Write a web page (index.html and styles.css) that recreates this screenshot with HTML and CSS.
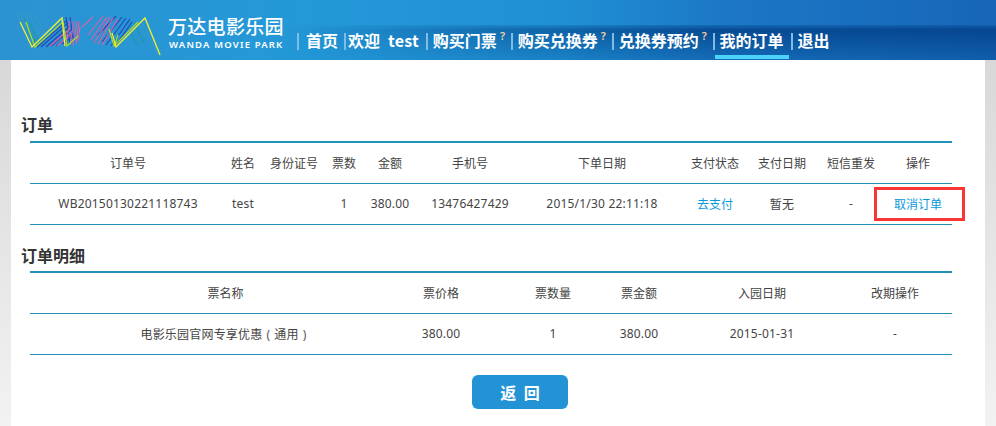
FILE: index.html
```html
<!DOCTYPE html>
<html lang="zh-CN">
<head>
<meta charset="utf-8">
<title>我的订单</title>
<link rel="stylesheet" href="styles.css">
</head>
<body>
<header class="header">
  <a class="logo">
    <svg class="logo-mark" width="155" height="55" viewBox="0 0 155 55" fill="none">
      <g stroke="#3fa0b8" stroke-width=".7" opacity=".8"><path d="M5 5 21 42M9 6 25 39M14 8 30 37M19 9 33 36M25 9 37 34"/><path d="M152 51 135 14M147 47 131 16M142 42 128 17"/></g>
      <g stroke="#1f9a8c" stroke-width="1"><path d="M14 13 27 42M19 17 31 40M46 16 58 38M124 17 134 38M118 22 127 40"/></g>
      <g stroke="#2346b8" stroke-width="1.1"><path d="M27 42 56 16M31 42 58 18M36 42 60 21M41 41 62 24M46 41 63 28M52 39 65 30"/><path d="M92 37 112 12M96 40 116 13M101 41 120 14M106 40 122 17M88 30 106 11"/><path d="M56 12 60 38M60 12 64 38"/></g>
      <g stroke="#de5fa6" stroke-width="1.1"><path d="M40 41 60 24M47 41 62 28M56 39 60 16M60 40 64 16M63 40 67 16M66 39 69 17M68 36 70 22"/><path d="M78 30 93 11M81 35 97 12M84 38 100 12M88 39 103 13M92 40 108 14M72 22 83 12"/></g>
      <path stroke="#a5d92f" stroke-width="1.3" d="M16 17 25 42 53 17 57 41 68 31"/>
      <path stroke="#a5d92f" stroke-width="1.3" d="M99 24 104 41 128 17 M104 41 108 30"/>
      <path stroke="#f0f030" stroke-width="1.3" d="M10 17 22 42 52 13 55 41"/>
      <path stroke="#f0f030" stroke-width="1.3" d="M102 28 106 42 135 13 150 50"/>
    </svg>
    <span class="logo-text">
      <span class="logo-cn">万达电影乐园</span>
      <span class="logo-en">WANDA MOVIE PARK</span>
    </span>
  </a>
  <nav class="nav">
    <span class="sep sep-first"></span><a class="nav-item">首页</a>
    <span class="sep sep-tight"></span><a class="nav-item">欢迎</a><a class="nav-item nav-user">test</a>
    <span class="sep"></span><a class="nav-item">购买门票</a><sup class="hint">?</sup>
    <span class="sep"></span><a class="nav-item">购买兑换券</a><sup class="hint">?</sup>
    <span class="sep"></span><a class="nav-item">兑换券预约</a><sup class="hint">?</sup>
    <span class="sep"></span><a class="nav-item nav-active">我的订单</a>
    <span class="sep"></span><a class="nav-item">退出</a>
  </nav>
</header>

<main class="page">
  <section class="section section-orders">
    <h2 class="title">订单</h2>
    <table class="grid">
      <colgroup>
        <col class="o1"><col class="o2"><col class="o3"><col class="o4"><col class="o5"><col class="o6"><col class="o7"><col class="o8"><col class="o9"><col class="o10"><col class="o11">
      </colgroup>
      <thead>
        <tr><th>订单号</th><th>姓名</th><th>身份证号</th><th>票数</th><th>金额</th><th>手机号</th><th>下单日期</th><th>支付状态</th><th>支付日期</th><th>短信重发</th><th>操作</th></tr>
      </thead>
      <tbody>
        <tr>
          <td>WB20150130221118743</td><td>test</td><td></td><td>1</td><td>380.00</td><td>13476427429</td><td>2015/1/30 22:11:18</td>
          <td><a class="link">去支付</a></td><td>暂无</td><td>-</td>
          <td class="marked"><a class="link">取消订单</a><span class="red-box"></span></td>
        </tr>
      </tbody>
    </table>
  </section>

  <section class="section section-detail">
    <h2 class="title">订单明细</h2>
    <table class="grid">
      <colgroup>
        <col class="d1"><col class="d2"><col class="d3"><col class="d4"><col class="d5"><col class="d6">
      </colgroup>
      <thead>
        <tr><th class="first">票名称</th><th>票价格</th><th>票数量</th><th>票金额</th><th>入园日期</th><th class="last">改期操作</th></tr>
      </thead>
      <tbody>
        <tr><td class="first">电影乐园官网专享优惠<span class="paren">(</span>通用<span class="paren">)</span></td><td>380.00</td><td>1</td><td>380.00</td><td>2015-01-31</td><td class="last">-</td></tr>
      </tbody>
    </table>
  </section>

  <div class="actions"><a class="back">返 回</a></div>
</main>
</body>
</html>
```

FILE: styles.css
```css
* { box-sizing: border-box; }
html, body { margin: 0; padding: 0; }
body {
  width: 996px;
  height: 426px;
  overflow: hidden;
  background: linear-gradient(#d8d8d8 60px, #f2f2f2 426px);
  font-family: "Noto Sans", "Noto Sans CJK SC", sans-serif;
  font-size: 12px;
  color: #444;
}
.header {
  height: 60px;
  display: flex;
  background: linear-gradient(90deg, #2c93d2 0, #2499d8 300px, #2090d4 560px, #1c78c6 720px, #1766b8 996px);
  position: relative;
}
.header::before {
  content: "";
  position: absolute;
  left: 0;
  right: 0;
  top: 25px;
  height: 35px;
  background: linear-gradient(rgba(0,60,130,.25) 0, rgba(0,60,130,.75) 5px, rgba(0,70,140,.25) 100%);
  -webkit-mask-image: linear-gradient(90deg, transparent 280px, rgba(0,0,0,.6) 500px, #000 720px);
  mask-image: linear-gradient(90deg, transparent 280px, rgba(0,0,0,.6) 500px, #000 720px);
}
.logo { display: flex; width: 297px; flex: none; position: relative; }
.logo-mark { margin: 5px 0 0 10px; flex: none; }
.logo-text { display: flex; flex-direction: column; margin: 13px 0 0 3px; color: #fff; }
.logo-cn { font-size: 19px; line-height: 26px; letter-spacing: .3px; font-weight: 500; font-family: "Noto Sans CJK SC", sans-serif; white-space: nowrap; }
.logo-en { font-size: 9.5px; line-height: 12px; font-weight: 600; letter-spacing: 1.17px; white-space: nowrap; font-family: "Noto Sans", sans-serif; margin-left: 1px; }
.nav { display: flex; align-items: flex-start; padding-top: 29px; color: #fff; height: 60px; white-space: nowrap; position: relative; }
.nav-item { font-family: "Noto Sans CJK SC", sans-serif; font-size: 16px; line-height: 22px; font-weight: 700; color: #fff; position: relative; height: 30px; }
.nav-user { margin: 0 1px 0 8px; letter-spacing: .2px; }
.nav-active { margin-right: 1px; }
.nav-active::after { content: ""; position: absolute; left: -5px; right: -5px; bottom: 0; height: 4px; background: #4ad5f8; }
.sep { width: 2px; height: 17px; margin: 4px 5px 0 6px; background: #7fbde6; flex: none; }
.sep-first { margin-left: 0; margin-right: 7px; }
.sep-tight { margin-right: 2px; }
.hint { font-size: 11px; line-height: 14px; margin: 0 -.2px 0 3px; color: #f5cfa0; font-weight: 600; }
.page { width: 974px; height: 366px; margin: 0 auto 0 11px; background: #fff; padding-top: 53px; }
.section-orders { height: 130px; }
.section-orders .title { margin-bottom: 6px; }
.section-detail { height: 132px; padding-top: 1px; }
.section-detail .title { margin-bottom: 5px; }
.title { margin: 0 0 0 10px; font-size: 16px; line-height: 22px; font-weight: 700; color: #333; font-family: "Noto Sans CJK SC", sans-serif; }
.grid { width: 922px; margin-left: 19px; table-layout: fixed; border-collapse: collapse; border-top: 2px solid #2292b6; }
.grid th, .grid td { font-weight: 400; text-align: center; padding: 0; height: 41px; border-bottom: 1px solid #2292b6; white-space: nowrap; }
.grid td { letter-spacing: .2px; }
.o1 { width: 196px; } .o2 { width: 34px; } .o3 { width: 68px; } .o4 { width: 32px; } .o5 { width: 60px; } .o6 { width: 100px; } .o7 { width: 164px; } .o8 { width: 62px; } .o9 { width: 72px; } .o10 { width: 66px; } .o11 { width: 68px; }
.d1 { width: 345px; } .d2 { width: 132px; } .d3 { width: 92px; } .d4 { width: 80px; } .d5 { width: 166px; } .d6 { width: 107px; }
.grid .first { padding-left: 46px; }
.grid .last { padding-right: 7px; }
.paren { margin: 0 4px; color: #555; }
.link { color: #0899dc; letter-spacing: 0; }
.marked { position: relative; }
.red-box { position: absolute; left: -10px; top: 3px; width: 91px; height: 34px; border: 3px solid #f83636; }
.actions { display: flex; padding-left: 461px; }
.back { width: 96px; height: 34px; border-radius: 6px; background: #2393d6; color: #fff; font-family: "Noto Sans CJK SC", sans-serif; font-weight: 700; font-size: 16px; line-height: 34px; text-align: center; word-spacing: 4px; }
```
